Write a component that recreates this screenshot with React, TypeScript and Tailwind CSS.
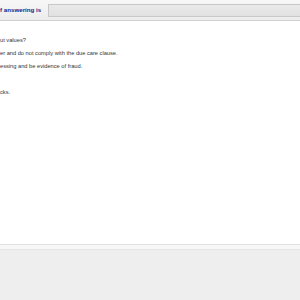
export default function App() {
  const lines = [
    { text: "ut values?", gap: "mt-[16px]" },
    { text: "er and do not comply with the due care clause.", gap: "mt-[6px]" },
    { text: "essing and be evidence of fraud.", gap: "mt-[6px]" },
    { text: "cks.", gap: "mt-[19px]" },
  ];

  return (
    <div
      className="flex h-[300px] w-[300px] flex-col overflow-hidden bg-white"
      style={{ fontFamily: '"Liberation Sans", Arial, sans-serif' }}
    >
      {/* top bar */}
      <div className="flex h-[21px] items-center gap-[7px] border-b border-[#cfcfcf] bg-gradient-to-b from-[#f7f7f7] to-[#ececec]">
        <span className="whitespace-nowrap text-[6.2px] font-bold leading-none text-[#1c1c80]">
          f answering is
        </span>
        <div className="h-[13px] flex-1 border border-r-0 border-[#c8c8c8] bg-gradient-to-b from-[#e9e9e9] to-[#e1e1e1]" />
      </div>

      {/* body */}
      <div className="flex flex-1 flex-col text-[5.7px] leading-[7px] text-[#333]">
        {lines.map((l) => (
          <p key={l.text} className={`${l.gap} whitespace-nowrap`}>
            {l.text}
          </p>
        ))}
      </div>

      {/* bottom panel */}
      <div className="h-[56px] border-t border-[#e2e2e2] bg-[#eeeeee]">
        <div className="h-[5px] border-b border-[#e4e4e4] bg-[#f7f7f7]" />
      </div>
    </div>
  );
}
